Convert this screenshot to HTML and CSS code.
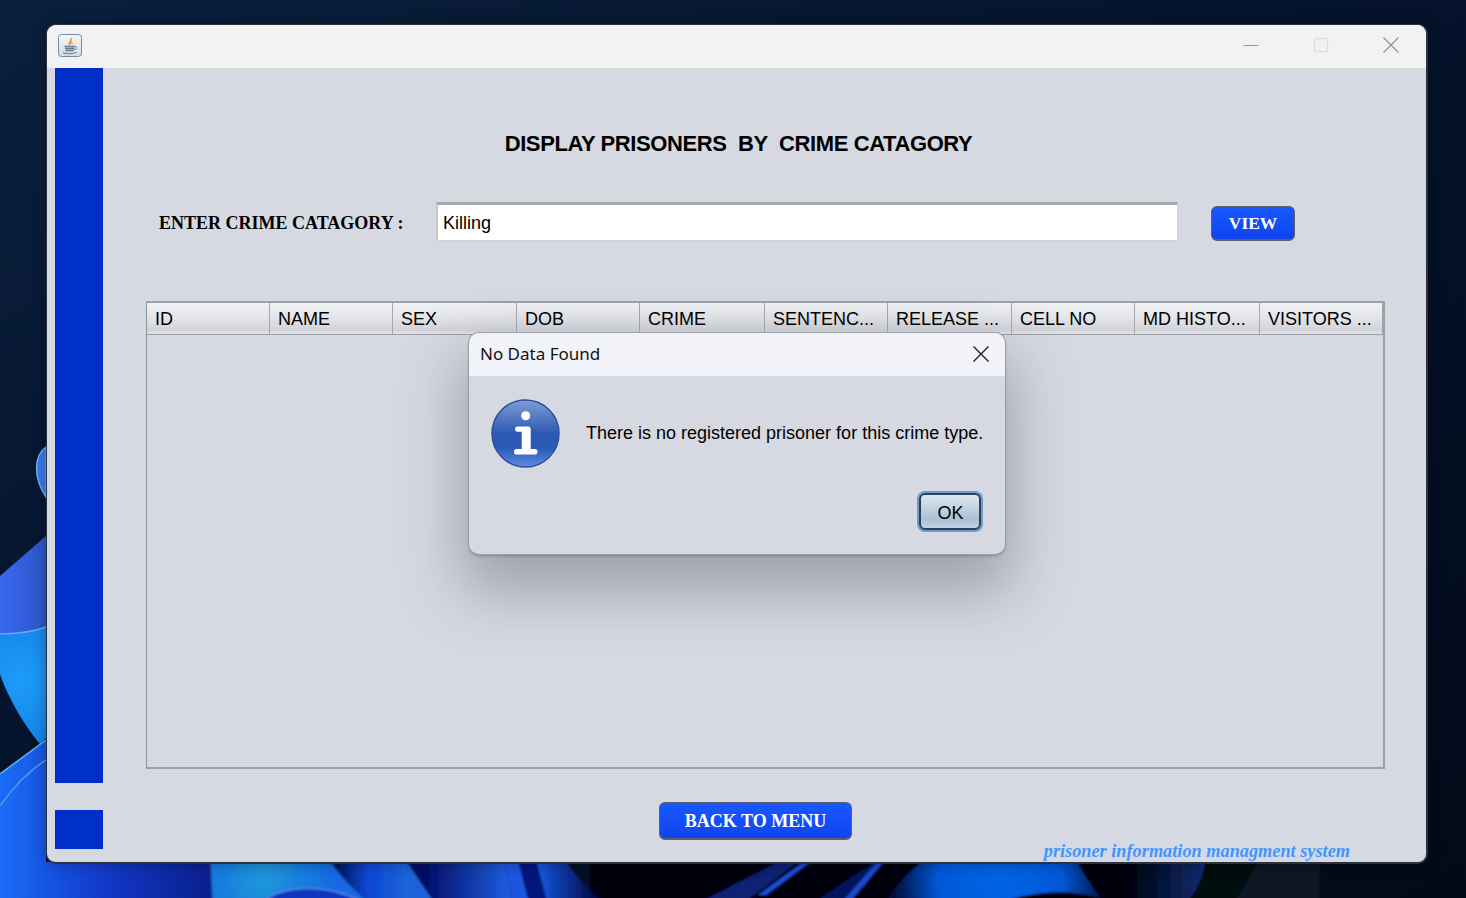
FILE: index.html
```html
<!DOCTYPE html>
<html lang="en">
<head>
<meta charset="utf-8">
<title>Display prisoners by crime category</title>
<link rel="stylesheet" href="styles.css">
</head>
<body>
<div class="desktop">
  <svg class="wallpaper" viewBox="0 0 1466 898" preserveAspectRatio="none" aria-hidden="true">
    <defs>
      <filter id="soft" x="-5%" y="-20%" width="110%" height="140%"><feGaussianBlur stdDeviation="1.2"/></filter>
      <linearGradient id="bg" x1="0" y1="0" x2="1" y2="1">
        <stop offset="0" stop-color="#0a1f3d"/>
        <stop offset="0.5" stop-color="#04122b"/>
        <stop offset="1" stop-color="#020a18"/>
      </linearGradient>
      <radialGradient id="petalA" cx="20" cy="680" r="120" gradientUnits="userSpaceOnUse">
        <stop offset="0" stop-color="#1c9cf8"/>
        <stop offset="1" stop-color="#0f6ee0"/>
      </radialGradient>
      <linearGradient id="petalB" gradientUnits="userSpaceOnUse" x1="0" y1="0" x2="212" y2="0">
        <stop offset="0" stop-color="#1a6cf8"/>
        <stop offset="0.5" stop-color="#1238c8"/>
        <stop offset="1" stop-color="#0a1f8a"/>
      </linearGradient>
      <linearGradient id="petalC" x1="0" y1="0" x2="1" y2="0">
        <stop offset="0" stop-color="#3a68f0"/>
        <stop offset="1" stop-color="#2a56c8"/>
      </linearGradient>
      <radialGradient id="cyan" cx="262" cy="880" r="75" gradientUnits="userSpaceOnUse">
        <stop offset="0" stop-color="#1f98d8"/>
        <stop offset="1" stop-color="#1268e4"/>
      </radialGradient>
      <linearGradient id="s1" gradientUnits="userSpaceOnUse" x1="330" y1="0" x2="405" y2="0">
        <stop offset="0" stop-color="#020a40"/>
        <stop offset="0.5" stop-color="#0a46d4"/>
        <stop offset="1" stop-color="#1b62d8"/>
      </linearGradient>
      <linearGradient id="s2" gradientUnits="userSpaceOnUse" x1="425" y1="0" x2="505" y2="0">
        <stop offset="0" stop-color="#020e66"/>
        <stop offset="1" stop-color="#1c5ad8"/>
      </linearGradient>
      <linearGradient id="s3" gradientUnits="userSpaceOnUse" x1="540" y1="0" x2="600" y2="0">
        <stop offset="0" stop-color="#1556dc"/>
        <stop offset="1" stop-color="#000338"/>
      </linearGradient>
      <radialGradient id="big" cx="1000" cy="882" r="112" gradientUnits="userSpaceOnUse">
        <stop offset="0" stop-color="#0664e4"/>
        <stop offset="0.55" stop-color="#0658d8"/>
        <stop offset="1" stop-color="#00062a"/>
      </radialGradient>
      <linearGradient id="s4" gradientUnits="userSpaceOnUse" x1="1130" y1="0" x2="1205" y2="0">
        <stop offset="0" stop-color="#00030f"/>
        <stop offset="1" stop-color="#0c2c70"/>
      </linearGradient>
    </defs>
    <rect width="1466" height="898" fill="url(#bg)"/>
    <path d="M46 447 C34 455 33 478 46 497 Z" fill="#3a78ec" stroke="#6cb4f0" stroke-width="1.5"/>
    <path d="M0 576 L46 536 L46 630 C30 633 15 634 0 634 Z" fill="url(#petalC)"/>
    <path d="M0 634 C15 634 30 633 46 627 L46 738 L40 744 C20 720 5 690 0 674 Z" fill="url(#petalA)"/>
    <path d="M0 634 C15 634 30 633 46 627" fill="none" stroke="#5cb0ea" stroke-width="1.5"/>
    <path d="M0 774 L46 740 L46 862 L212 862 L212 898 L0 898 Z" fill="url(#petalB)"/>
    <path d="M0 774 L46 740" fill="none" stroke="#62b4ea" stroke-width="1.5"/>
    <path d="M0 806 C14 786 30 770 46 760" fill="none" stroke="#4e9ae6" stroke-width="1.5"/>

    <g filter="url(#soft)">
      <rect x="590" y="856" width="640" height="46" fill="#00010c"/>
      <path d="M210 856 H326 C340 875 352 888 368 902 H212 Z" fill="url(#cyan)"/>
      <path d="M262 902 C285 884 330 884 362 902 Z" fill="#0a34c0" stroke="#4f86e6" stroke-width="1.5"/>
      <path d="M326 856 H403 L434 902 H368 C352 888 340 875 326 856 Z" fill="url(#s1)"/>
      <path d="M403 856 H503 L513 902 H434 Z" fill="url(#s2)"/>
      <path d="M503 856 H517 L529 902 H513 Z" fill="#1e54e0"/>
      <path d="M517 856 H535 L547 902 H529 Z" fill="#06157a"/>
      <path d="M535 856 H563 C575 875 588 890 604 902 H547 Z" fill="url(#s3)"/>
      <path d="M700 902 L790 856 H806 L745 902 Z" fill="#0a2070"/>
      <path d="M758 895 L806 860 L813 860 L766 895 Z" fill="#1c4fd8"/>
      <path d="M842 902 L880 858 H887 L850 902 Z" fill="#1a48cc"/>
      <path d="M815 902 L880 858 L842 902 Z" fill="#06185c"/>
      <path d="M884 902 C900 880 915 866 930 856 H1073 C1085 875 1092 888 1104 902 H1116 C1070 888 1040 890 1000 902 Z" fill="url(#big)"/>
      <path d="M1130 856 H1207 C1204 875 1198 888 1188 902 H1130 Z" fill="url(#s4)"/>
      <path d="M1188 902 C1198 888 1204 875 1207 856 H1262 L1234 902 Z" fill="#03070f"/>
      <path d="M1234 902 L1262 856 H1320 V902 Z" fill="#071522"/>
    </g>
  </svg>

  <div class="window">
    <header class="titlebar">
      <span class="app-icon">
        <svg viewBox="0 0 24 24" width="24" height="24" aria-hidden="true">
          <defs>
            <linearGradient id="javaBg" x1="0" y1="0" x2="0" y2="1">
              <stop offset="0" stop-color="#f6f6f6"/>
              <stop offset="1" stop-color="#d6d8da"/>
            </linearGradient>
          </defs>
          <rect x="0.5" y="0.5" width="23" height="22" rx="3" fill="url(#javaBg)" stroke="#6d8fa8"/>
          <path d="M13.500 3.500 C11 6 12.800 6.800 11 8.800 C10 10 10.500 11 11.500 11.500 C12 9.800 14.800 9.500 13.500 7.500 C13 6.800 14 5.500 13.500 3.500 Z" fill="#e8862a"/>
          <path d="M14.500 7.500 L13.500 11 L15 9.500 Z" fill="#f0a050"/>
          <path d="M6.500 12.500 H16.500 M7 14.500 H16 M7.500 16.500 H15.500" stroke="#5a7f9c" stroke-width="1.300" fill="none"/>
          <path d="M16 12.800 C19.500 12 19.500 15.500 15.500 15.500" stroke="#5a7f9c" fill="none"/>
          <path d="M5 18.800 C9 20 14 20 18.500 18.500" stroke="#5a7f9c" stroke-width="1" fill="none"/>
        </svg>
      </span>
      <div class="window-controls">
        <svg class="ctl" viewBox="0 0 16 16" width="16" height="16" aria-hidden="true"><path d="M0.500 8.500 H15.500" stroke="#9a9a9a"/></svg>
        <svg class="ctl" viewBox="0 0 16 16" width="16" height="16" aria-hidden="true"><rect x="1.500" y="1.500" width="13" height="13" rx="1.500" fill="none" stroke="#dedede" stroke-width="1.300"/></svg>
        <svg class="ctl" viewBox="0 0 16 16" width="16" height="16" aria-hidden="true"><path d="M0.500 0.500 L15.500 15.500 M15.500 0.500 L0.500 15.500" stroke="#8e8e8e" stroke-width="1.100"/></svg>
      </div>
    </header>

    <div class="body">
      <aside class="sidebar">
        <div class="side-bar-long"></div>
        <div class="side-bar-short"></div>
      </aside>

      <main class="content">
        <h1 class="heading">DISPLAY PRISONERS&nbsp; BY&nbsp; CRIME CATAGORY</h1>

        <div class="search-row">
          <label class="search-label" for="crime">ENTER CRIME CATAGORY :</label>
          <input class="search-input" id="crime" type="text" value="Killing">
          <button class="blue-btn view-btn" type="button">VIEW</button>
        </div>

        <section class="table">
          <div class="thead">
            <div class="th">ID</div>
            <div class="th">NAME</div>
            <div class="th">SEX</div>
            <div class="th">DOB</div>
            <div class="th">CRIME</div>
            <div class="th">SENTENC...</div>
            <div class="th">RELEASE ...</div>
            <div class="th">CELL NO</div>
            <div class="th">MD HISTO...</div>
            <div class="th">VISITORS ...</div>
          </div>
        </section>

        <div class="back-row">
          <button class="blue-btn back-btn" type="button">BACK TO MENU</button>
        </div>
        <p class="brand">prisoner information managment system</p>
      </main>
    </div>

    <div class="dialog" role="dialog" aria-label="No Data Found">
      <div class="dialog-title">
        <span>No Data Found</span>
        <svg viewBox="0 0 16 16" width="16" height="16" aria-hidden="true"><path d="M0.500 0.500 L15.500 15.500 M15.500 0.500 L0.500 15.500" stroke="#1a1a1a" stroke-width="1.300"/></svg>
      </div>
      <div class="dialog-body">
        <div class="dialog-msg">
          <svg class="info" viewBox="0 0 70 70" width="70" height="70" aria-hidden="true">
            <defs>
              <linearGradient id="infoFill" x1="0" y1="0" x2="0" y2="1">
                <stop offset="0" stop-color="#7f9dd6"/>
                <stop offset="0.5" stop-color="#2c59b3"/>
                <stop offset="0.72" stop-color="#2a5bb8"/>
                <stop offset="1" stop-color="#5c8de0"/>
              </linearGradient>
            </defs>
            <circle cx="34.500" cy="34.500" r="33.500" fill="url(#infoFill)" stroke="#2d4f9e" stroke-width="1.500"/>
            <circle cx="34.700" cy="16.700" r="4.500" fill="#fff"/>
            <path d="M24 30 Q24 27.500 26.500 27.500 H37 Q39.700 27.500 39.700 30 V50 H44 Q46.500 50 46.500 52.700 Q46.500 55.500 44 55.500 H25.500 Q23 55.500 23 52.700 Q23 50 25.500 50 H30.700 V32.700 H26.500 Q24 32.700 24 30 Z" fill="#fff"/>
          </svg>
          <p class="dialog-text">There is no registered prisoner for this crime type.</p>
        </div>
        <div class="dialog-actions">
          <button class="ok-btn" type="button">OK</button>
        </div>
      </div>
    </div>
  </div>
</div>
</body>
</html>
```
FILE: styles.css
```css
* { box-sizing: border-box; }
html, body { margin: 0; height: 100%; overflow: hidden; }
body { font-family: "Liberation Sans", Arial, sans-serif; color: #000; }

.desktop { position: relative; width: 1466px; height: 898px; overflow: hidden; background: #04122b; }
.wallpaper { position: absolute; inset: 0; width: 100%; height: 100%; display: block; }

.window {
  position: absolute;
  left: 46px;
  top: 24px;
  width: 1382px;
  height: 840px;
  display: flex;
  flex-direction: column;
  border: 1px solid #2c3340;
  border-width: 1px 2px 2px 1px;
  border-radius: 10px;
  overflow: hidden;
  background: #d6d9e2;
  box-shadow: 0 0 14px rgba(0,0,0,.3);
}

.titlebar {
  height: 43px;
  flex: none;
  background: #f2f2f2;
  display: flex;
  align-items: flex-start;
  justify-content: space-between;
  padding: 9px 27px 0 11px;
}
.app-icon { display: block; width: 24px; height: 24px; }
.window-controls { display: flex; gap: 54px; padding-top: 3px; }
.ctl { display: block; }

.body { flex: 1; display: flex; min-height: 0; }

.sidebar {
  flex: none;
  width: 57px;
  padding-left: 8px;
  display: flex;
  flex-direction: column;
  gap: 27px;
}
.side-bar-long { width: 48px; height: 715px; background: #002ec8; }
.side-bar-short { width: 48px; height: 39px; background: #002ec8; }

.content { flex: 1; padding-left: 42px; min-width: 0; position: relative; }

.heading {
  margin: 0;
  padding-top: 63px;
  width: 1185px;
  height: 134px;
  text-align: center;
  font-family: "Liberation Sans", Arial, sans-serif;
  font-size: 22px;
  line-height: 26px;
  font-weight: 700;
  letter-spacing: -0.4px;
  white-space: nowrap;
}

.search-row { display: flex; align-items: flex-start; height: 99px; }
.search-label {
  width: 290px;
  padding: 10px 0 0 13px;
  font-family: "Liberation Serif", "Times New Roman", serif;
  font-weight: 700;
  font-size: 18px;
  line-height: 22px;
  white-space: nowrap;
}
.search-input {
  width: 742px;
  height: 39px;
  padding: 2px 5px 0;
  border: 1px solid #d0d2d8;
  border-top: 3px solid #a8aab0;
  border-left: 2px solid #c4c6cc;
  background: #fff;
  font-family: "Liberation Sans", Arial, sans-serif;
  font-size: 18px;
  color: #000;
  outline: none;
}

.blue-btn {
  font-family: "Liberation Serif", "Times New Roman", serif;
  font-weight: 700;
  color: #fff;
  background: linear-gradient(#1a58ff, #0f44ee);
  border: 1px solid #5a6070;
  border-bottom: 2px solid #5a6070;
  border-radius: 6px;
  padding: 0;
  white-space: nowrap;
}
.view-btn { width: 84px; height: 35px; margin: 4px 0 0 33px; font-size: 17.4px; }

.table {
  width: 1239px;
  height: 468px;
  border: 1px solid #8e929c;
  border-width: 2px 2px 2px 1px;
  border-color: #9da0a8 #9da0a8 #9da0a8 #8e929c;
}
.thead {
  display: grid;
  grid-template-columns: 123px 123px 124px 123px 125px 123px 124px 123px 125px 123px;
  height: 32px;
  border-bottom: 1px solid #9a9da6;
}
.th {
  padding: 5px 0 0 8px;
  font-size: 18px;
  line-height: 22px;
  white-space: nowrap;
  overflow: hidden;
  background: linear-gradient(#f0f1f4 0, #e6e7ec 40%, #d2d4da 88%, #e4e5ea 100%);
  border-right: 1px solid #a4a7ae;
}

.back-row { padding: 33px 0 0 513px; }
.back-btn { width: 193px; height: 38px; font-size: 18px; padding-top: 1px; }

.brand {
  position: absolute;
  right: 76px;
  bottom: 0;
  margin: 0;
  font-family: "Liberation Serif", "Times New Roman", serif;
  font-style: italic;
  font-weight: 700;
  font-size: 18.3px;
  line-height: 22px;
  color: #3f96ff;
  white-space: nowrap;
}

.dialog {
  position: absolute;
  left: 422px;
  top: 308px;
  width: 536px;
  height: 221px;
  border-radius: 10px;
  overflow: hidden;
  background: #d6d9e2;
  box-shadow: 0 0 0 1px #9b9ea6, 0 2px 3px rgba(0,0,0,.25), 0 30px 60px 8px rgba(60,64,74,.36);
  display: flex;
  flex-direction: column;
}
.dialog-title {
  height: 43px;
  flex: none;
  background: #f1f3f8;
  display: flex;
  align-items: center;
  justify-content: space-between;
  padding: 0 16px 2px 11px;
  font-family: "Noto Sans", "Open Sans", sans-serif;
  font-size: 17px;
  color: #111;
}
.dialog-body { flex: 1; padding: 23px 22px 0; display: flex; flex-direction: column; }
.dialog-msg { display: flex; align-items: center; gap: 25px; height: 70px; }
.info { flex: none; display: block; }
.dialog-text { margin: 0 0 2px; font-size: 18px; white-space: nowrap; }
.dialog-actions { display: flex; justify-content: flex-end; padding: 24px 2px 0 0; }
.ok-btn {
  width: 62px;
  height: 37px;
  border: 2px solid #2f3f56;
  border-radius: 6px;
  background: linear-gradient(#dfe7ee, #a9c0d4 75%, #c2d2e0);
  box-shadow: 0 0 0 2px #6a9ccc;
  font-family: "Liberation Sans", Arial, sans-serif;
  font-size: 18px;
  color: #000;
  padding: 3px 0 0 1px;
}
```
